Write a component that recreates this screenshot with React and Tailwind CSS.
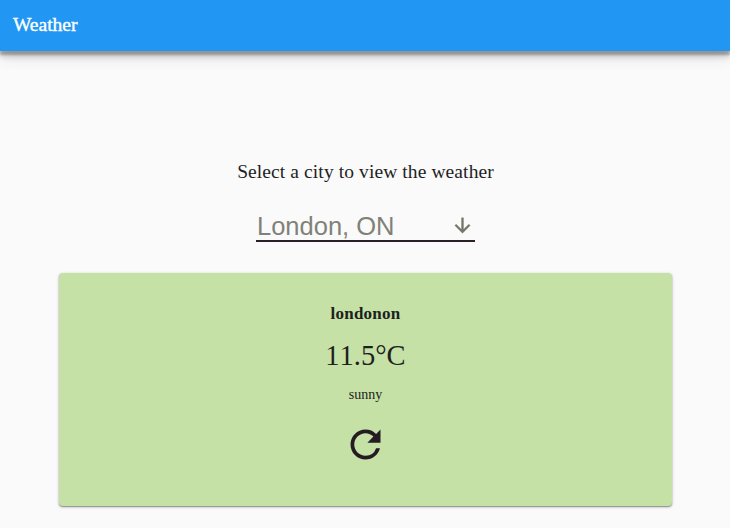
export default function App() {
  return (
    <div className="flex h-[528px] w-[730px] flex-col overflow-hidden bg-[#fafafa] font-['Liberation_Serif',serif] text-[#1f1f1f]">
      <header className="h-[51px] shrink-0 bg-[#2196f3] pt-[11px] pl-[13px] text-[19.5px] leading-[27px] text-white shadow-[0_4px_2px_rgba(0,0,0,0.24),0_6px_5px_rgba(0,0,0,0.14),0_6px_14px_rgba(0,0,0,0.12)] [-webkit-text-stroke:0.4px_white]">
        <h1 className="w-fit">Weather</h1>
      </header>
      <main className="flex flex-col items-center pt-[109px] pl-px">
        <p className="text-[19.5px] leading-[24px] tracking-[0.1px] whitespace-nowrap">Select a city to view the weather</p>
        <div className="mt-[27px] flex h-[31px] w-[219px] items-center justify-between border-b-2 border-[#2a2028] pr-px font-['Liberation_Sans',sans-serif] text-[25.5px] text-[#7f8278]">
          <span className="pt-[2px] pl-px">London, ON</span>
          <svg viewBox="0 0 24 24" className="h-[23px] w-[23px]" fill="#75756a" stroke="#75756a" strokeWidth="0.4">
            <path d="M20 12l-1.41-1.41L13 16.17V4h-2v12.17l-5.58-5.59L4 12l8 8 8-8z" />
          </svg>
        </div>
        <section className="mt-[31px] flex h-[233px] w-[613px] flex-col items-center rounded-[4px] bg-[#c5e1a5] pt-[31px] shadow-[0_1px_3px_rgba(0,0,0,0.3),0_1px_1px_rgba(0,0,0,0.25)]">
          <h2 className="text-[17px] leading-[20px] font-bold tracking-[0.25px]">londonon</h2>
          <p className="mt-[14px] text-[28.5px] leading-[36px] [font-kerning:none]">11.5°C</p>
          <p className="mt-[13px] text-[14px] leading-[16px]">sunny</p>
          <svg viewBox="0 0 24 24" className="mt-[19px] h-[45px] w-[45px]" fill="#241c22">
            <path d="M17.65 6.35A7.958 7.958 0 0012 4c-4.42 0-7.99 3.58-7.99 8s3.57 8 7.99 8c3.73 0 6.84-2.55 7.73-6h-2.08A5.99 5.99 0 0112 18c-3.31 0-6-2.69-6-6s2.69-6 6-6c1.66 0 3.14.69 4.22 1.78L13 11h7V4l-2.35 2.35z" />
          </svg>
        </section>
      </main>
    </div>
  );
}
